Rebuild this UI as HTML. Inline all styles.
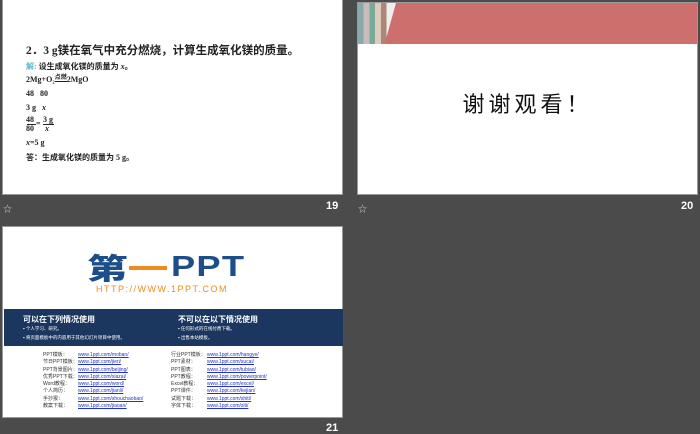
<!DOCTYPE html>
<html><head><meta charset="utf-8"><style>
*{margin:0;padding:0;box-sizing:border-box}
body{width:700px;height:434px;background:#4b4b4b;position:relative;overflow:hidden;font-family:"Liberation Sans","Noto Sans CJK SC",sans-serif}
.s{position:absolute;background:#fff;border:1px solid #9a9a9a}
.n{position:absolute;color:#fff;font-weight:bold;font-size:11px}
.st{position:absolute;color:#ccc;font-size:9px}
.t{position:absolute;font-family:"Liberation Serif","Noto Sans CJK SC",serif;font-weight:bold;font-size:8px;color:#222;white-space:nowrap}
.lk{position:absolute;font-size:5px;color:#333;white-space:nowrap;line-height:7.3px}
.lk u{color:#2233cc}
</style></head><body>
<div class="s" style="left:2px;top:-2px;width:341px;height:197px">
<div class="t" style="left:23px;top:43px;font-size:11.5px">2．3 g镁在氧气中充分燃烧，计算生成氧化镁的质量。</div>
<div class="t" style="left:23px;top:62px"><span style="color:#5ab7d0">解:</span> 设生成氧化镁的质量为 <i>x</i>。</div>
<div class="t" style="left:23px;top:76px">2Mg+O₂<span style="display:inline-block;border-bottom:1px solid #222;font-size:6px;line-height:5px;vertical-align:3px">点燃</span>2MgO</div>
<div class="t" style="left:23px;top:90px">48 &nbsp;&nbsp;80</div>
<div class="t" style="left:23px;top:104px">3 g &nbsp;&nbsp;<i>x</i></div>
<div class="t" style="left:23px;top:116px;line-height:9px">48<br>80</div>
<div style="position:absolute;left:24px;top:125px;width:9px;height:1px;background:#222"></div>
<div class="t" style="left:33px;top:120px">=</div>
<div class="t" style="left:40px;top:116px;line-height:9px">3 g<br>&nbsp;<i>x</i></div>
<div style="position:absolute;left:40px;top:125px;width:11px;height:1px;background:#222"></div>
<div class="t" style="left:23px;top:139px"><i>x</i>=5 g</div>
<div class="t" style="left:23px;top:153px">答：生成氧化镁的质量为 5 g。</div>
</div>
<div class="st" style="left:3px;top:202px">☆</div>
<div class="n" style="left:326px;top:200px">19</div>

<div class="s" style="left:357px;top:2px;width:341px;height:193px">
<div style="position:absolute;left:0;top:0;width:339px;height:41px;background:#cc6f6d"></div>
<div style="position:absolute;left:0;top:0;width:38px;height:41px;background:linear-gradient(90deg,#8aa 0 15%,#cbb 15% 30%,#7a9 30% 45%,#dcb 45% 60%,#a87 60% 75%,#eee 75%);clip-path:polygon(0 0,100% 0,70% 100%,0 100%)"></div>
<div style="position:absolute;left:0;top:0;width:339px;text-align:center;top:84px;font-size:22px;letter-spacing:4px;color:#111;font-family:'Noto Sans CJK SC',sans-serif">谢谢观看！</div>
</div>
<div class="st" style="left:358px;top:202px">☆</div>
<div class="n" style="left:681px;top:200px">20</div>

<div class="s" style="left:2px;top:226px;width:341px;height:192px">
<div style="position:absolute;left:84px;top:26px;font-size:29px;font-weight:900;color:#1d4e89;font-family:'Noto Sans CJK SC',sans-serif;line-height:29px;transform:scaleX(1.4);transform-origin:left">第</div>
<div style="position:absolute;left:126px;top:39px;width:38px;height:4px;background:#f08a1c"></div>
<div style="position:absolute;left:168px;top:26px;font-size:29px;font-weight:bold;color:#1d4e89;line-height:29px;letter-spacing:1px;transform:scaleX(1.25);transform-origin:left">PPT</div>
<div style="position:absolute;left:93px;top:57px;font-size:9px;color:#f08a1c;letter-spacing:1.5px">HTTP://WWW.1PPT.COM</div>
<div style="position:absolute;left:1px;top:82px;width:339px;height:37px;background:#1b375f;color:#fff">
<div style="position:absolute;left:19px;top:5px;font-size:8px;font-weight:bold">可以在下列情况使用</div>
<div style="position:absolute;left:19px;top:17px;font-size:4.5px">▪ 个人学习、研究。</div>
<div style="position:absolute;left:19px;top:26px;font-size:4.5px">▪ 将页面模板中的内容用于其他幻灯片项目中使用。</div>
<div style="position:absolute;left:174px;top:5px;font-size:8px;font-weight:bold">不可以在以下情况使用</div>
<div style="position:absolute;left:174px;top:17px;font-size:4.5px">▪ 任何形式的在线付费下载。</div>
<div style="position:absolute;left:174px;top:26px;font-size:4.5px">▪ 出售本站模板。</div>
</div>
<div class="lk" style="left:40px;top:125px">PPT模板：<br>节日PPT模板：<br>PPT背景图片：<br>优秀PPT下载：<br>Word教程：<br>个人简历：<br>手抄报：<br>教案下载：</div>
<div class="lk" style="left:75px;top:125px"><u>www.1ppt.com/moban/</u><br><u>www.1ppt.com/jieri/</u><br><u>www.1ppt.com/beijing/</u><br><u>www.1ppt.com/xiazai/</u><br><u>www.1ppt.com/word/</u><br><u>www.1ppt.com/jianli/</u><br><u>www.1ppt.com/shouchaobao/</u><br><u>www.1ppt.com/jiaoan/</u></div>
<div class="lk" style="left:168px;top:125px">行业PPT模板：<br>PPT素材：<br>PPT图表：<br>PPT教程：<br>Excel教程：<br>PPT课件：<br>试题下载：<br>字体下载：</div>
<div class="lk" style="left:204px;top:125px"><u>www.1ppt.com/hangye/</u><br><u>www.1ppt.com/sucai/</u><br><u>www.1ppt.com/tubiao/</u><br><u>www.1ppt.com/powerpoint/</u><br><u>www.1ppt.com/excel/</u><br><u>www.1ppt.com/kejian/</u><br><u>www.1ppt.com/shiti/</u><br><u>www.1ppt.com/ziti/</u></div>
</div>
<div class="n" style="left:326px;top:422px">21</div>
</body></html>
